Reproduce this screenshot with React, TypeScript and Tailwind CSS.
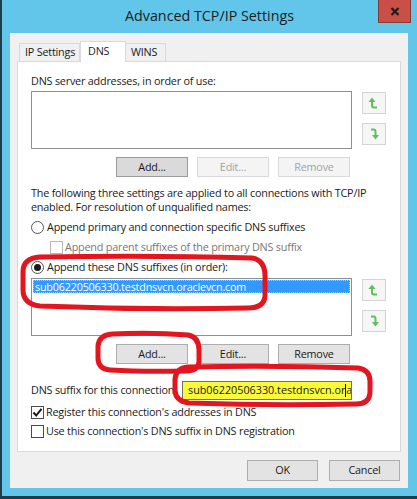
import React from 'react';

// Advanced TCP/IP Settings — DNS tab

function Btn({ label, disabled = false, pressed = false, className = '' }: { label: string; disabled?: boolean; pressed?: boolean; className?: string }) {
  return (
    <div
      className={
        'h-[20px] w-[72px] flex items-center justify-center leading-none border ' +
        (disabled
          ? 'bg-[#f4f4f4] border-[#d9d9d9] text-[#a3a3a3] '
          : pressed
            ? 'bg-[#dadada] border-[#9c9c9c] text-[#1a1a1a] '
            : 'bg-[#e3e3e3] border-[#adadad] text-[#1a1a1a] ') +
        className
      }
    >
      {label}
    </div>
  );
}

function ArrowUp() {
  return (
    <svg width="12" height="14" viewBox="0 0 12 14">
      <path d="M4 5 V9.5 Q4 11.5 6 11.5 H9" fill="none" stroke="#5cc05c" strokeWidth="2" />
      <path d="M0.5 6 L4 1.5 L7.5 6 Z" fill="#5cc05c" />
    </svg>
  );
}

function ArrowDown() {
  return (
    <svg width="12" height="14" viewBox="0 0 12 14">
      <path d="M3 2.5 H5.5 Q7.5 2.5 7.5 4.5 V9" fill="none" stroke="#5cc05c" strokeWidth="2" />
      <path d="M4 8 L7.5 12.5 L11 8 Z" fill="#5cc05c" />
    </svg>
  );
}

function MoveButtons() {
  return (
    <div className="ml-[10px] pt-[1px] flex flex-col gap-[9px]">
      <div className="w-[24px] h-[22px] border border-[#d4d4d4] bg-[#f6f6f6] flex items-center justify-center">
        <ArrowUp />
      </div>
      <div className="w-[24px] h-[22px] border border-[#d4d4d4] bg-[#f6f6f6] flex items-center justify-center">
        <ArrowDown />
      </div>
    </div>
  );
}

function Check({ checked = false, disabled = false }: { checked?: boolean; disabled?: boolean }) {
  return (
    <span
      className={
        'w-[13px] h-[13px] border bg-white flex items-center justify-center shrink-0 ' +
        (disabled ? 'border-[#b8b8b8]' : 'border-[#4a4a4a]')
      }
    >
      {checked && (
        <svg width="11" height="11" viewBox="0 0 11 11">
          <path d="M1.5 5.5 L4.2 8.5 L9.5 1.8" fill="none" stroke="#1a1a1a" strokeWidth="2" />
        </svg>
      )}
    </span>
  );
}

function Radio({ checked = false }: { checked?: boolean }) {
  return (
    <span className="w-[13px] h-[13px] rounded-full border border-[#555] bg-white flex items-center justify-center shrink-0">
      {checked && <span className="w-[7px] h-[7px] rounded-full bg-[#1a1a1a]" />}
    </span>
  );
}

export default function App() {
  return (
    <div className="relative w-[417px] h-[499px] bg-[#62c6ea] border-l-[2px] border-b-[3px] border-[#1d3c4c] font-['Open_Sans',sans-serif] text-[#1a1a1a] overflow-hidden">
      {/* title bar */}
      <div className="h-[33px] grid grid-cols-[1fr_auto_1fr] items-start">
        <div />
        <div className="pt-[6px] text-[14.3px] leading-[20px] text-[#1c1c1c] whitespace-nowrap">Advanced TCP/IP Settings</div>
        <div className="flex justify-end pr-[6px]">
          <div className="w-[33px] h-[23px] bg-[#c85046] border border-[#8a3a34] border-t-0 flex items-center justify-center">
            <svg width="10" height="9" viewBox="0 0 10 9">
              <path d="M1.5 1 L8.5 8 M8.5 1 L1.5 8" stroke="#1c1c1c" strokeWidth="2.2" />
            </svg>
          </div>
        </div>
      </div>

      {/* client area */}
      <div className="ml-[8px] w-[398px] h-[455px] bg-[#f0f0f0] pl-[7px] pr-[7px] pt-[8px] text-[10.8px] tracking-[-0.2px] whitespace-nowrap">
        {/* tabs */}
        <div className="h-[20px] flex items-end pl-[2px]">
          <div className="h-[18px] px-[5px] flex items-center border border-b-0 border-[#d9d9d9] bg-[#f0f0f0] w-[61px]">IP Settings</div>
          <div className="relative z-10 h-[21px] -mb-[1px] w-[46px] flex items-start pt-[1px] pl-[7px] border border-b-0 border-[#d9d9d9] bg-white">DNS</div>
          <div className="h-[18px] w-[40px] pl-[5px] flex items-center border border-b-0 border-l-0 border-[#d9d9d9] bg-[#f0f0f0]">WINS</div>
        </div>

        {/* DNS panel */}
        <div className="h-[391px] border border-[#d9d9d9] bg-white pl-[13px] pt-[11px]">
          <div className="h-[15px] leading-[15px]">DNS server addresses, in order of use:</div>
          <div className="mt-[3px] flex">
            <div className="w-[321px] h-[58px] border border-[#8e8f8f] bg-white" />
            <MoveButtons />
          </div>
          <div className="mt-[8px] w-[321px] pr-[2px] flex justify-end gap-[9px]">
            <Btn label="Add..." pressed className="w-[69px]" />
            <Btn label="Edit..." disabled />
            <Btn label="Remove" disabled />
          </div>

          <div className="mt-[9px] leading-[14px]">
            The following three settings are applied to all connections with TCP/IP
            <br />
            enabled. For resolution of unqualified names:
          </div>

          <div className="mt-[5px] h-[16px] flex items-center gap-[3px]">
            <Radio />
            <span>Append primary and connection specific DNS suffixes</span>
          </div>
          <div className="mt-[4px] h-[16px] flex items-center gap-[2px] pl-[19px] text-[#777]">
            <Check disabled />
            <span>Append parent suffixes of the primary DNS suffix</span>
          </div>
          <div className="mt-[4px] h-[16px] flex items-center gap-[3px]">
            <Radio checked />
            <span>Append these DNS suffixes (in order):</span>
          </div>

          <div className="mt-[3px] flex">
            <div className="w-[321px] h-[58px] border border-[#8e8f8f] bg-white p-[1px]">
              <div className="h-[13px] bg-[#3399ff] border border-dotted border-[#9ad0ff] text-white leading-[11px] pl-[1px]">
                sub06220506330.testdnsvcn.oraclevcn.com
              </div>
            </div>
            <MoveButtons />
          </div>
          <div className="mt-[8px] w-[321px] pr-[2px] flex justify-end gap-[9px]">
            <Btn label="Add..." />
            <Btn label="Edit..." />
            <Btn label="Remove" />
          </div>

          <div className="mt-[17px] h-[19px] flex items-center">
            <span className="w-[151px] overflow-hidden">DNS suffix for this connection:</span>
            <div className="w-[170px] h-[19px] border border-[#6f6f6f] bg-[#fbfb3c] overflow-hidden flex items-center pl-[5px] tracking-normal">
              <span>sub06220506330.testdnsvcn.or</span>
              <span className="w-[1px] h-[13px] bg-black shrink-0" />
              <span>aclevcn.com</span>
            </div>
          </div>

          <div className="mt-[4px] h-[16px] flex items-center gap-[2px]">
            <Check checked />
            <span>Register this connection's addresses in DNS</span>
          </div>
          <div className="mt-[3px] h-[16px] flex items-center gap-[2px]">
            <Check />
            <span>Use this connection's DNS suffix in DNS registration</span>
          </div>
        </div>

        {/* dialog buttons */}
        <div className="mt-[8px] pr-[1px] flex justify-end gap-[11px]">
          <div className="w-[71px] h-[21px] border border-[#adadad] bg-[#e3e3e3] flex items-center justify-center">OK</div>
          <div className="w-[71px] h-[21px] border border-[#adadad] bg-[#e3e3e3] flex items-center justify-center">Cancel</div>
        </div>
      </div>

      {/* red markup drawn over the dialog */}
      <svg className="absolute inset-0 pointer-events-none" width="417" height="499">
        <g fill="none" stroke="#e3161f" strokeWidth="5" strokeLinejoin="round">
          <path d="M38 257 Q150 255 250 258 Q263 260 263 276 L263 296 Q262 308 246 308 Q140 310 38 306 Q21 304 21 290 L21 272 Q21 258 38 257 Z" />
          <path d="M110 334 Q150 332 186 335 Q197 337 197 350 L197 362 Q196 371 184 371 Q140 372 108 370 Q96 369 96 358 L96 346 Q97 335 110 334 Z" />
          <path d="M186 367 Q270 365 356 368 Q368 370 368 381 L368 393 Q367 404 354 404 Q270 406 187 403 Q173 401 173 390 L173 379 Q174 368 186 367 Z" />
        </g>
      </svg>
    </div>
  );
}
